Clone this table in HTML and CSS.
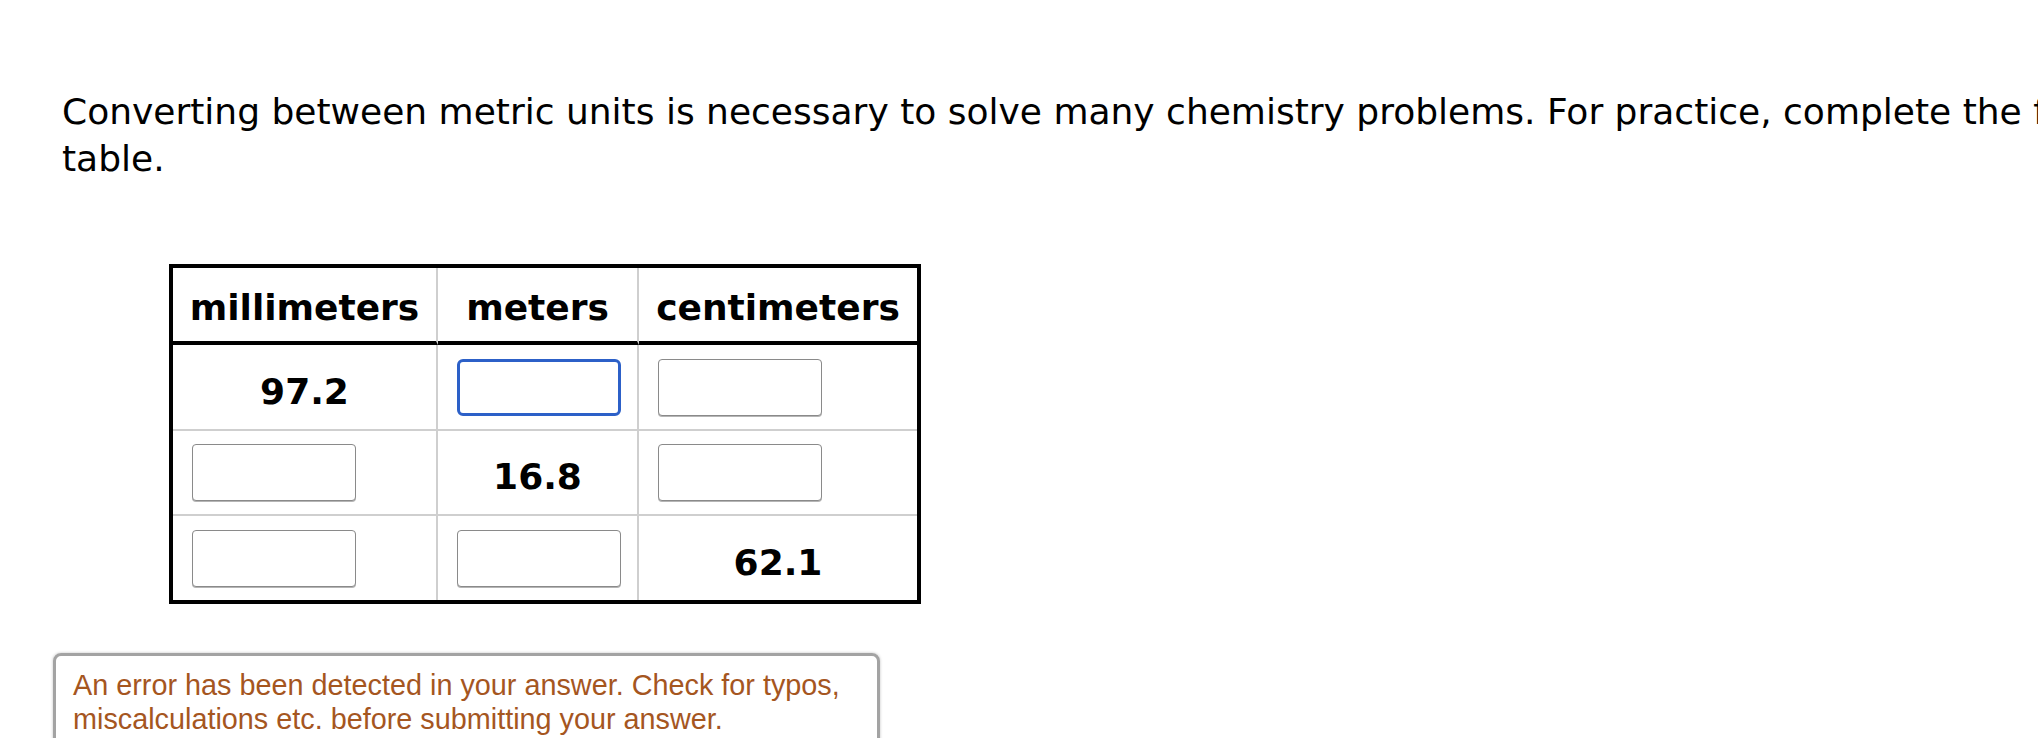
FILE: index.html
```html
<!DOCTYPE html>
<html lang="en">
<head>
<meta charset="utf-8">
<title>Metric conversion</title>
<link rel="stylesheet" href="styles.css">
</head>
<body>
<main class="page">
  <p class="prompt">Converting between metric units is necessary to solve many chemistry problems. For practice, complete the following table.</p>
  <table class="grid">
    <colgroup>
      <col class="c1"><col class="c2"><col class="c3">
    </colgroup>
    <thead>
      <tr>
        <th>millimeters</th>
        <th>meters</th>
        <th class="last">centimeters</th>
      </tr>
    </thead>
    <tbody>
      <tr class="r1">
        <td class="num">97.2</td>
        <td class="in"><input class="box focus" type="text" aria-label="meters"></td>
        <td class="in last"><input class="box" type="text" aria-label="centimeters"></td>
      </tr>
      <tr class="r2">
        <td class="in"><input class="box" type="text" aria-label="millimeters"></td>
        <td class="num">16.8</td>
        <td class="in last"><input class="box" type="text" aria-label="centimeters"></td>
      </tr>
      <tr class="r3">
        <td class="in"><input class="box" type="text" aria-label="millimeters"></td>
        <td class="in"><input class="box" type="text" aria-label="meters"></td>
        <td class="num last">62.1</td>
      </tr>
    </tbody>
  </table>
  <div class="error">An error has been detected in your answer. Check for typos, miscalculations etc. before submitting your answer.</div>
</main>
</body>
</html>
```
FILE: styles.css
```css
html, body {
  margin: 0;
  padding: 0;
  overflow: hidden;
  background: #fff;
}
.page {
  padding: 0 0 0 53px;
  width: 2300px;
  font-family: "DejaVu Sans", Verdana, sans-serif;
  color: #000;
}
.prompt {
  margin: 88px 0 0 9px;
  width: 2160px;
  font-size: 36px;
  line-height: 47px;
}
.grid {
  margin: 82px 0 0 116px;
  border-collapse: separate;
  border-spacing: 0;
  border: 4px solid #000;
  table-layout: fixed;
  width: 752px;
}
.c1 { width: 265px; }
.c2 { width: 201px; }
.c3 { width: 278px; }
.grid th,
.grid td {
  box-sizing: border-box;
}
.grid th {
  height: 77px;
  padding: 6px 0 0;
  font-size: 36px;
  font-weight: bold;
  border-right: 2px solid #cfcfcf;
  border-bottom: 4px solid #000;
  text-align: center;
  vertical-align: middle;
}
.grid td {
  padding: 0;
  border-right: 2px solid #cfcfcf;
  border-bottom: 2px solid #cfcfcf;
  vertical-align: middle;
}
.grid .last { border-right: none; }
.r1 td { height: 86px; }
.r2 td { height: 85px; }
.r3 td { height: 84px; border-bottom: none; }
.grid .num {
  padding-top: 8px;
  text-align: center;
  font-size: 36px;
  font-weight: bold;
}
.grid .in {
  text-align: left;
  padding-left: 19px;
}
.box {
  display: block;
  box-sizing: border-box;
  width: 164px;
  height: 57px;
  margin: 0;
  border: 1px solid #8a8a8a;
  border-radius: 4px;
  box-shadow: 0 1px 0 #b5b5b5;
  background: #fff;
  outline: none;
}
.box.focus {
  border: 3px solid #2c60c8;
  border-radius: 6px;
  box-shadow: none;
}
.error {
  margin-top: 49px;
  box-sizing: border-box;
  width: 827px;
  padding: 12px 17px 10px;
  border: 3px solid #a3a3a3;
  border-radius: 8px;
  box-shadow: 0 0 3px rgba(0,0,0,0.25);
  font-family: "Liberation Sans", Arial, sans-serif;
  font-size: 28.8px;
  line-height: 34px;
  color: #a5561f;
}
```
